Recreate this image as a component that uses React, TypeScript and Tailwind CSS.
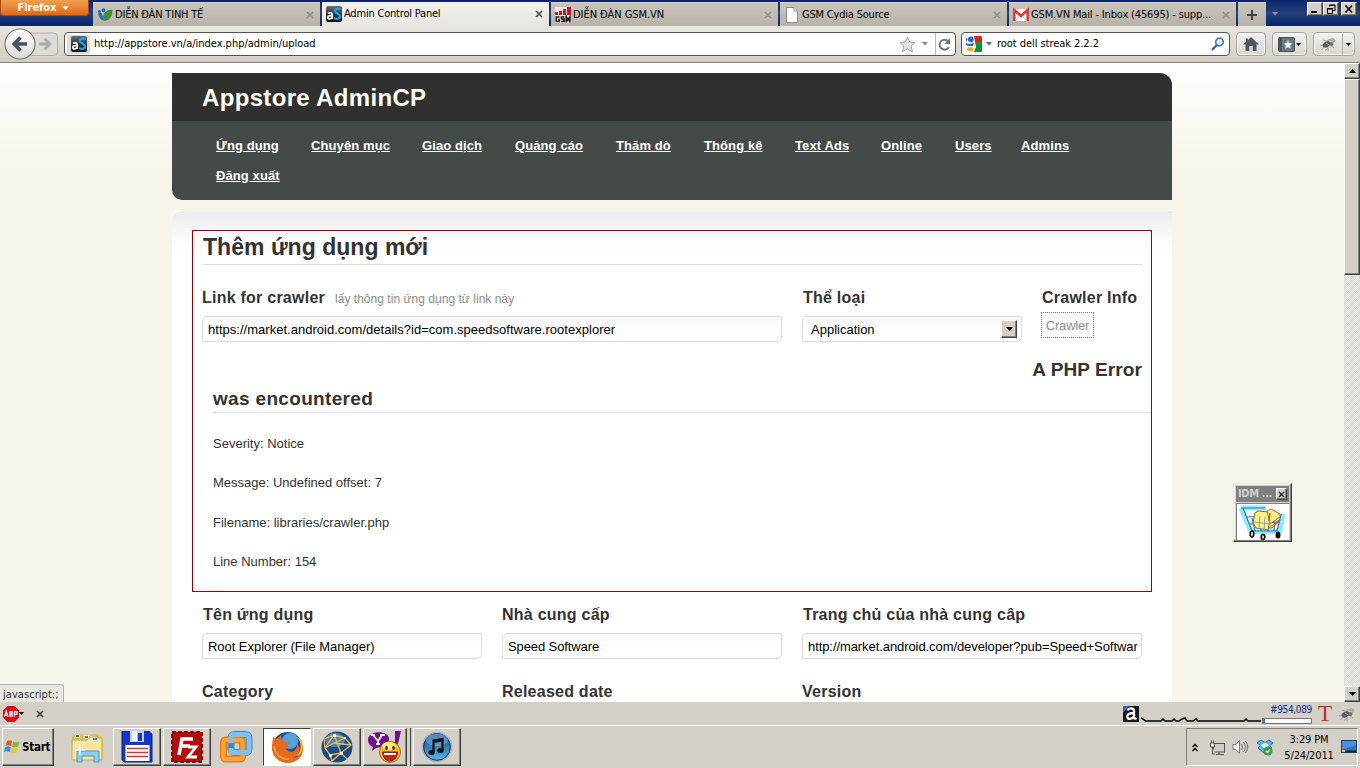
import type { ReactNode } from "react";

const raised =
  "border border-t-white border-l-white border-r-[#404040] border-b-[#404040] bg-[#d4d0c8] shadow-[inset_-1px_-1px_0_#808080]";

/* ---------- icons ---------- */

function AsIcon() {
  return (
    <svg width="16" height="16" viewBox="0 0 16 16" className="shrink-0">
      <defs>
        <linearGradient id="asbg" x1="0" y1="0" x2="0" y2="1">
          <stop offset="0" stopColor="#6a6e72" />
          <stop offset=".55" stopColor="#2c3034" />
          <stop offset="1" stopColor="#0c0e10" />
        </linearGradient>
      </defs>
      <rect width="16" height="16" rx="2" fill="url(#asbg)" />
      <path d="M2 7.4C3.5 6.4 6.2 6.4 6.2 8.600V13M6.200 9.600C3.400 9.400 1.800 10 1.800 11.400C1.800 13.400 5 13.300 6.200 11.400" fill="none" stroke="#fff" strokeWidth="1.700" />
      <path d="M14.300 3.800C12.600 2 9 2.400 9 5C9 7.800 14 7.200 14 10.300C14 13.400 9.800 13.300 8 11.800" fill="none" stroke="#18a0ea" strokeWidth="2.300" />
    </svg>
  );
}

function TinhTeIcon() {
  return (
    <svg width="16" height="16" viewBox="0 0 16 16" className="shrink-0">
      <circle cx="6.500" cy="3.200" r="2" fill="#1d6fb8" />
      <circle cx="2.400" cy="4.500" r="1.500" fill="#1d6fb8" />
      <path d="M1 6.500C3 5.500 5 6 5.500 8L6.500 13.500C3.500 13.500 2 9 1 6.500Z" fill="#1d6fb8" />
      <path d="M15.500 2.500C9 2.500 4.500 7 6.500 14C12.500 14.500 15.500 9 15.500 2.500Z" fill="#3f8f3c" />
    </svg>
  );
}

function GsmIcon() {
  return (
    <svg width="16" height="16" viewBox="0 0 16 16" className="shrink-0">
      <rect width="16" height="16" fill="#eee8e6" />
      <path d="M0 5h3v3H0zM4 4h3v4H4zM8 2h3v6H8zM12 0h4v8h-4z" fill="#d01424" />
      <path d="M4.500 10H1.300V14.500H4V12.500H3M9.500 10H6.500V12H9V14.500H6M11.300 15.500V10L13 13L14.800 10V15.500" fill="none" stroke="#161616" strokeWidth="1.700" />
    </svg>
  );
}

function PageIcon() {
  return (
    <svg width="16" height="16" viewBox="0 0 16 16" className="shrink-0">
      <path d="M2.500 .5H10L13.500 4V15.500H2.500Z" fill="#fbfbfb" stroke="#8b8b8b" />
      <path d="M10 .5V4H13.500" fill="#ddd" stroke="#999" />
    </svg>
  );
}

function GmailIcon() {
  return (
    <svg width="16" height="16" viewBox="0 0 16 16" className="shrink-0">
      <rect y="2" width="16" height="12" rx="1" fill="#fff" />
      <path d="M1.300 14V3L8 9L14.700 3V14" fill="none" stroke="#d93a36" strokeWidth="2.500" />
      <path d="M3 13L6.500 9M13 13L9.500 9" stroke="#e8aaa8" strokeWidth=".8" />
    </svg>
  );
}

function CloseX({ color = "#8e8b85", w = 8 }: { color?: string; w?: number }) {
  return (
    <svg width={w} height={w} viewBox="0 0 8 8" className="shrink-0">
      <path d="M1 1L7 7M7 1L1 7" stroke={color} strokeWidth="1.600" />
    </svg>
  );
}

function Down({ color = "#000", w = 7 }: { color?: string; w?: number }) {
  return (
    <svg width={w} height={w / 2 + 0.5} viewBox="0 0 7 4" className="shrink-0">
      <path d="M0 0H7L3.500 4Z" fill={color} />
    </svg>
  );
}

function BugIcon({ w = 16 }: { w?: number }) {
  return (
    <svg width={w} height={w} viewBox="0 0 16 16" className="shrink-0">
      <path d="M3 9L0 10M4 11L1.500 14M8 11L8 15M10 9L14 12M6 5L3 4M8 12L5 14.500" stroke="#8a8a88" strokeWidth=".7" />
      <ellipse cx="10.500" cy="5.500" rx="5" ry="2.700" transform="rotate(-20 10.500 5.500)" fill="#a9a9a7" />
      <ellipse cx="6.500" cy="8.500" rx="4" ry="2.700" transform="rotate(-25 6.500 8.500)" fill="#5a5a58" />
      <circle cx="11.500" cy="8" r="2" fill="#74726f" />
      <path d="M6 7L9 9M9 5L13 6" stroke="#d8d8d8" strokeWidth=".7" />
    </svg>
  );
}

/* ---------- browser chrome ---------- */

function Tab({ icon, title, active, tracking }: { icon: ReactNode; title: string; active?: boolean; tracking?: string }) {
  return (
    <div
      className={
        "flex h-6 w-[227px] shrink-0 items-center pr-[6px] pl-1 " +
        (active
          ? "bg-gradient-to-b from-[#f2f1ed] to-[#e8e6e1]"
          : "border-t border-[#d5d2ca] bg-gradient-to-b from-[#c9c5bd] to-[#b7b3ab]")
      }
    >
      {icon}
      <span className={"ml-[2px] flex-1 pt-px whitespace-nowrap " + (tracking ?? "tracking-[-0.200px]")}>{title}</span>
      <CloseX color={active ? "#4c4c4c" : "#93908a"} />
    </div>
  );
}

function WindowButton({ children }: { children: ReactNode }) {
  return (
    <div className={"flex h-[14px] w-4 items-center justify-center " + raised}>
      <svg width="10" height="10" viewBox="0 0 10 10" fill="none" stroke="#000">
        {children}
      </svg>
    </div>
  );
}

function TabStrip() {
  return (
    <div className="flex h-[26px] items-start bg-gradient-to-b from-[#0a246a] via-[#24407c] to-[#0a246a]">
      <div className="flex h-4 w-[89px] items-center justify-center gap-[6px] rounded-b-[3px] border border-t-0 border-[#a04c10] bg-gradient-to-b from-[#f1a04c] to-[#dd6a12] pr-[2px] pt-px font-['DejaVu_Sans_Condensed'] text-[11px] font-bold tracking-[-0.050px] text-white">
        Firefox
        <Down color="#fff" />
      </div>
      <div className="ml-1 flex gap-[2px] pt-[2px]">
        <Tab icon={<TinhTeIcon />} title="DIỄN ĐÀN TINH TẾ" />
        <Tab icon={<AsIcon />} title="Admin Control Panel" active />
        <Tab icon={<GsmIcon />} title="DIỄN ĐÀN GSM.VN" tracking="tracking-[-0.050px]" />
        <Tab icon={<PageIcon />} title="GSM Cydia Source" tracking="tracking-[-0.200px]" />
        <Tab icon={<GmailIcon />} title="GSM.VN Mail - Inbox (45695) - supp..." tracking="tracking-[-0.150px]" />
        <div className="flex h-6 w-7 items-center justify-center border-t border-[#d5d2ca] bg-gradient-to-b from-[#c9c5bd] to-[#b7b3ab]">
          <svg width="10" height="10" viewBox="0 0 10 10">
            <path d="M5 0V10M0 5H10" stroke="#3e444a" strokeWidth="2" />
          </svg>
        </div>
      </div>
      <div className="ml-[6px] pt-[12px]">
        <Down color="#8e97ac" w={6} />
      </div>
      <div className="mt-[2px] mr-[3px] ml-auto flex">
        <WindowButton>
          <path d="M1 8H7" strokeWidth="2" />
        </WindowButton>
        <WindowButton>
          <path d="M3.500 3V1H9V6.500H7M3 1.500H9" />
          <path d="M1.500 4.500H6.500V9.500H1.500ZM1 5H7" />
        </WindowButton>
        <div className="w-[2px]" />
        <WindowButton>
          <path d="M1.500 1.500L8 8.500M8 1.500L1.500 8.500" strokeWidth="1.600" />
        </WindowButton>
      </div>
    </div>
  );
}

const toolButton =
  "flex h-6 items-center justify-center rounded-[4px] border border-[#a6a39d] bg-gradient-to-b from-[#f3f2ef] to-[#d9d6d0] shadow-[inset_0_0_0_1px_#f8f7f4]";

function NavBar() {
  return (
    <div className="flex h-[37px] items-center border-b border-[#85827c] bg-gradient-to-b from-[#e8e6e1] to-[#d2cec6] pl-1">
      <svg width="56" height="34" viewBox="0 0 56 34" className="shrink-0">
        <defs>
          <linearGradient id="bk" x1="0" y1="0" x2="0" y2="1">
            <stop offset="0" stopColor="#fff" />
            <stop offset="1" stopColor="#dcdad5" />
          </linearGradient>
        </defs>
        <rect x="24" y="6" width="29.500" height="22.500" rx="3.500" fill="#dedcd7" stroke="#b5b2ac" />
        <circle cx="16" cy="17" r="15" fill="url(#bk)" stroke="#77746f" strokeWidth="1.200" />
        <path d="M23 17H11M16.500 10.500L10 17L16.500 23.500" fill="none" stroke="#49535e" strokeWidth="3.300" />
        <path d="M35 17H44M40.500 11.500L46 17L40.500 22.500" fill="none" stroke="#a7adb1" strokeWidth="2.800" />
      </svg>
      <div className="ml-1 flex h-6 w-[892px] items-center rounded-[4px] border border-[#55534f] bg-white pl-[2px]">
        <div className="flex h-[19px] w-[23px] items-center justify-center rounded-[2px] bg-[#dedbd6]">
          <AsIcon />
        </div>
        <span className="ml-1 flex-1 pt-px tracking-[-0.020px]">http://appstore.vn/a/index.php/admin/upload</span>
        <svg width="17" height="17" viewBox="0 0 17 17">
          <path d="M8.500 1L10.800 6L16 6.500L12.200 10L13.400 15.700L8.500 12.800L3.600 15.700L4.800 10L1 6.500L6.200 6Z" fill="#e3e3e3" stroke="#a5a5a5" />
        </svg>
        <div className="mr-[7px] ml-[6px]">
          <Down color="#858585" w={6} />
        </div>
        <div className="flex h-[22px] w-5 items-center justify-center border-l border-[#bbb] pr-[2px]">
          <svg width="13" height="13" viewBox="0 0 13 13">
            <path d="M10.500 3.500A5 5 0 1 0 11 9" fill="none" stroke="#777" strokeWidth="2" />
            <path d="M12 0V6H6.500Z" fill="#777" />
          </svg>
        </div>
      </div>
      <div className="ml-[5px] flex h-6 w-[269px] items-center rounded-[4px] border border-[#55534f] bg-white pr-1 pl-1">
        <svg width="16" height="16" viewBox="0 0 16 16">
          <rect width="16" height="16" rx="1.500" fill="#fff" />
          <path d="M8 0H14.500A1.500 1.500 0 0 1 16 1.500V6H9Z" fill="#e3231e" />
          <path d="M9 6H16V14.500A1.500 1.500 0 0 1 14.500 16H8L10 11Z" fill="#178f3b" />
          <path d="M0 1.500L1.500 3.500L0 6Z" fill="#2d66c8" />
          <circle cx="4.800" cy="3.300" r="2.900" fill="#2d66c8" />
          <path d="M0 7L3 8L8 7L7 10L3 10L0 9Z" fill="#2d66c8" />
          <ellipse cx="4.200" cy="13.200" rx="3.300" ry="2.300" fill="#f2b01d" />
        </svg>
        <div className="mr-[4px] ml-1">
          <Down color="#6b6b6b" w={6} />
        </div>
        <span className="ml-[1px] flex-1 pt-px tracking-[-0.050px]">root dell streak 2.2.2</span>
        <svg width="14" height="14" viewBox="0 0 14 14">
          <circle cx="8.500" cy="5" r="3.800" fill="#eef6fd" stroke="#3f7fbd" strokeWidth="1.700" />
          <path d="M5.800 8L1 12.800" stroke="#356ca5" strokeWidth="2.400" />
        </svg>
      </div>
      <div className={"ml-[6px] w-[30px] " + toolButton}>
        <svg width="16" height="14" viewBox="0 0 16 14">
          <path d="M8 0L16 7.500H13.500V14H9.700V9H6.300V14H2.500V7.500H0L3 4.700V1.500H5V3Z" fill="#4c5965" />
        </svg>
      </div>
      <div className={"ml-[6px] w-[35px] gap-[1px] " + toolButton}>
        <svg width="17" height="15" viewBox="0 0 17 15">
          <rect x=".5" y=".5" width="16" height="14" rx="1" fill="#6a7681" stroke="#45515d" />
          <rect x="1" y="1" width="3" height="13" fill="#495765" />
          <path d="M10 3L11.300 6L14.500 6.300L12 8.400L12.800 11.800L10 10L7.200 11.800L8 8.400L5.500 6.300L8.700 6Z" fill="#fff" />
        </svg>
        <Down w={5} />
      </div>
      <div className={"ml-[6px] w-[42px] " + toolButton}>
        <div className="flex flex-1 justify-center">
          <BugIcon />
        </div>
        <div className="flex h-[22px] w-3 items-center justify-center border-l border-[#b0ada6]">
          <Down w={5} />
        </div>
      </div>
    </div>
  );
}

/* ---------- web page ---------- */

const menu = [
  ["Ứng dụng", "w-[95px]"],
  ["Chuyên mục", "w-[111px]"],
  ["Giao dịch", "w-[93px]"],
  ["Quảng cáo", "w-[101px]"],
  ["Thăm dò", "w-[88px]"],
  ["Thống kê", "w-[91px]"],
  ["Text Ads", "w-[86px]"],
  ["Online", "w-[74px]"],
  ["Users", "w-[66px]"],
  ["Admins", "w-[80px]"],
  ["Đăng xuất", "w-[95px]"],
];

const field =
  "block h-[26px] w-full rounded-tl-[5px] rounded-br-[5px] border border-[#dcdcdc] bg-gradient-to-b from-[#f8f8f8] to-white to-60% px-[5px] text-[13px] text-black outline-none";

function Label({ children, className = "" }: { children: ReactNode; className?: string }) {
  return <div className={"h-5 text-[16px] leading-[22px] font-bold whitespace-nowrap tracking-[0.240px] " + className}>{children}</div>;
}

function ScrollBar() {
  return (
    <div className="flex w-4 shrink-0 flex-col bg-[repeating-conic-gradient(#fff_0_25%,#d4d0c8_0_50%)] bg-[length:2px_2px]">
      <div className={"flex h-4 items-center justify-center " + raised}>
        <svg width="7" height="4" viewBox="0 0 7 4">
          <path d="M0 4H7L3.500 0Z" />
        </svg>
      </div>
      <div className={"h-[196px] " + raised} />
      <div className={"mt-auto flex h-4 items-center justify-center " + raised}>
        <Down />
      </div>
    </div>
  );
}

function AdminPage() {
  return (
    <div className="h-full flex-1 overflow-hidden bg-[linear-gradient(#fffefc,#f7f4e9_110px)] pt-[10px] pl-[172px] font-['Liberation_Sans',Arial,sans-serif] text-[13px] text-[#333]">
      <div className="w-[1000px]">
        <div className="flex h-12 items-center rounded-tr-[12px] bg-[#30302e] pt-px pl-[30px] text-[24px] font-bold tracking-[0.330px] text-white">
          Appstore AdminCP
        </div>
        <div className="flex h-[79px] flex-wrap content-start rounded-bl-[10px] bg-[#444a48] pt-[10px] pl-11">
          {menu.map(([name, width]) => (
            <a key={name} className={"h-[30px] shrink-0 whitespace-nowrap leading-[30px] font-bold tracking-[0.100px] text-white underline " + width}>
              {name}
            </a>
          ))}
        </div>
        <div className="mt-[10px] h-[560px] rounded-tl-[10px] border-t border-white bg-[linear-gradient(#ededed,#fff_40px)] px-5 pt-[19px]">
          <div className="h-[362px] border border-[#990000] pl-[9px]">
            <h2 className="h-[34px] w-[940px] border-b border-[#dcdcdc] pl-px text-[23px] leading-[32px] font-bold tracking-[0.030px]">
              Thêm ứng dụng mới
            </h2>
            <div className="flex h-[77px] pt-[22px]">
              <div className="w-[580px]">
                <Label>
                  Link for crawler
                  <span className="ml-[10px] text-[12px] font-normal tracking-[0.030px] text-[#8c8c8c]">lấy thông tin ứng dụng từ link này</span>
                </Label>
                <input className={"mt-[9px] tracking-[0.020px] " + field} readOnly value="https://market.android.com/details?id=com.speedsoftware.rootexplorer" />
              </div>
              <div className="ml-5 w-[220px]">
                <Label className="pl-px">Thể loại</Label>
                <div className={"mt-[9px] " + field}>
                  <div className="flex h-6 items-center pl-[3px]">
                    <span className="flex-1 pt-px">Application</span>
                    <div className={"-mr-[1px] flex h-[18px] w-4 items-center justify-center " + raised}>
                      <Down />
                    </div>
                  </div>
                </div>
              </div>
              <div className="ml-[19px]">
                <Label className="pl-px">Crawler Info</Label>
                <div className="mt-[5px] flex h-[26px] w-[53px] items-center justify-center border border-dotted border-[#777] pt-px tracking-[-0.200px] text-[#8c8c8c]">Crawler</div>
              </div>
            </div>
            <div className="h-[41px] w-[940px] pt-[17px] text-right text-[19px] leading-[22px] font-bold tracking-[0.100px]">A PHP Error</div>
            <div className="ml-[11px] h-[30px] border-b border-[#dcdcdc] pt-[5px] text-[19px] leading-[22px] font-bold tracking-[0.330px]">was encountered</div>
            <div className="ml-[11px] grid auto-rows-[39.400px] pt-[11px] leading-[39px]">
              <p>Severity: Notice</p>
              <p>Message: Undefined offset: 7</p>
              <p>Filename: libraries/crawler.php</p>
              <p>Line Number: 154</p>
            </div>
          </div>
          <div className="grid grid-cols-[280px_280px_340px] gap-x-5 pt-[12px] pl-[10px]">
            <div>
              <Label className="pl-px">Tên ứng dụng</Label>
              <input className={"mt-[9px] tracking-[-0.040px] " + field} readOnly value="Root Explorer (File Manager)" />
            </div>
            <div>
              <Label>Nhà cung cấp</Label>
              <input className={"mt-[9px] tracking-[-0.100px] " + field} readOnly value="Speed Software" />
            </div>
            <div>
              <Label className="pl-px">Trang chủ của nhà cung câp</Label>
              <input className={"mt-[9px] !px-[5px] !pr-1 tracking-[-0.080px] " + field} readOnly value="http://market.android.com/developer?pub=Speed+Software" />
            </div>
            <Label className="mt-[22px]">Category</Label>
            <Label className="mt-[22px]">Released date</Label>
            <Label className="mt-[22px]">Version</Label>
          </div>
        </div>
      </div>
    </div>
  );
}

function IdmWindow() {
  return (
    <div className="absolute top-[483px] left-[1233px] h-[59px] w-[59px] border border-t-[#e8e6e0] border-l-[#e8e6e0] border-r-[#404040] border-b-[#404040] bg-[#d4d0c8] p-[2px] shadow-[inset_-1px_-1px_0_#808080,inset_1px_1px_0_#fff]">
      <div className="flex h-4 items-center bg-[#808080] pr-[2px] pl-[2px] text-[11px] font-bold tracking-[-0.350px] text-[#d4d0c8]">
        <span className="flex-1 whitespace-nowrap">IDM ...</span>
        <div className={"flex h-3 w-[11px] items-center justify-center " + raised}>
          <CloseX color="#000" w={7} />
        </div>
      </div>
      <div className="mt-px h-[37px] overflow-hidden border-t border-l border-[#808080] bg-white">
        <svg width="52" height="36" viewBox="0 0 52 36">
          <path d="M4 4H29M4 4L14 28L43 27L46 10" fill="none" stroke="#8cecff" strokeWidth="5" />
          <path d="M4 4H28M6 4L15 27H40L44 11L10 13M13 20L42 18M15 14L18 27M23 14L24 27M32 13L31 27M38 13L37 27" fill="none" stroke="#3474bb" strokeWidth="1.200" />
          <path d="M18 9L21 7L32 8L34 11L31 26L19 24L16 19Z" fill="#fff08a" stroke="#8a6a25" />
          <path d="M30 7L34 5L43 10V13L33 20ZM43 15L35 24L32 24Z" fill="#fff08a" stroke="#b0692a" />
          <path d="M33 9L32 17M43 16L37 22" stroke="#f24a18" strokeWidth="1.400" />
          <path d="M17 18L33 20M23 12L22 25M28 13L27 26" stroke="#7896a0" strokeWidth=".8" />
          <ellipse cx="15" cy="30" rx="1.800" ry="3" fill="#ddd" stroke="#111" strokeWidth="1.600" />
          <ellipse cx="26" cy="33" rx="1.800" ry="2.500" fill="#ddd" stroke="#111" strokeWidth="1.600" />
          <ellipse cx="41" cy="31" rx="2.500" ry="3.500" fill="#111" />
        </svg>
      </div>
    </div>
  );
}

/* ---------- add-on bar and taskbar ---------- */

function AddonBar() {
  return (
    <div className="flex h-[23px] items-center bg-[#d4d0c8] pl-[3px]">
      <svg width="16" height="16" viewBox="0 0 15 15">
        <path d="M4.500 .5H10.500L14.500 4.500V10.500L10.500 14.500H4.500L.5 10.500V4.500Z" fill="#e30613" stroke="#b51a1a" />
        <path d="M1.500 10L3 5L4.700 10M2.300 8.500H4.300M6.300 10V5.500H8.500V7.500H6.500M8.500 7.500V9.800H6.500M10.700 10V5.500H13V7.800H10.700" fill="none" stroke="#fff" strokeWidth="1.200" />
      </svg>
      <Down w={5} />
      <div className="ml-[12px]">
        <CloseX color="#3c3c3c" />
      </div>
      <svg width="18" height="17" viewBox="0 0 18 17" className="ml-auto">
        <rect x="1" y="1" width="16" height="16" fill="#15161e" />
        <path d="M1 1H7L1 8Z" fill="#2d66ee" />
        <path d="M5.500 5.500C6.500 2.500 12 2.500 12 6V12.500C12 14 13.500 14 14.500 13M12 8C7 8 5 9.500 5.300 12C5.800 14.800 10 14.500 12 11.500" fill="none" stroke="#fff" strokeWidth="2.300" />
      </svg>
      <svg width="121" height="17" viewBox="0 0 121 17" className="mt-1 ml-px">
        <path d="M0 11L5 14H20L22 12L24 14H31L33 12L35 14L38 14L41 12L44 11L46 14H52L55 12L57 14H103L105 12L107 14H120" fill="none" stroke="#000" strokeWidth="1.500" />
      </svg>
      <div className="flex w-[50px] flex-col items-end font-['DejaVu_Sans_Condensed'] text-[10px] leading-[12px] tracking-[-0.350px] text-[#0c2d8e]">
        #954,089
        <div className="mt-[2px] h-[6px] w-[50px] border border-[#77777c] bg-white">
          <div className="h-full w-[2px] bg-[#3f71e8]" />
        </div>
      </div>
      <span className="ml-[6px] font-['Liberation_Serif',serif] text-[23px] leading-[22px] text-[#b92e24]">T</span>
      <div className="mr-[5px] ml-[7px]">
        <BugIcon />
      </div>
    </div>
  );
}

function TaskButton({ children, className = "" }: { children: ReactNode; className?: string }) {
  return <div className={"flex h-[38px] w-12 shrink-0 items-center justify-center " + raised + " " + className}>{children}</div>;
}

function TaskBar() {
  return (
    <div className="flex h-[43px] items-start border-t border-white bg-[#d4d0c8] pt-[2px] pl-[2px]">
      <div className={"flex h-[38px] w-[52px] items-center gap-[1px] pl-[1px] " + raised}>
        <svg width="17" height="16" viewBox="0 0 17 16">
          <path d="M3 2C5 .8 6.500 1 8 2L7 7.200C5.500 6.200 3.500 6 1.500 7Z" fill="#e8572a" />
          <path d="M9 2.500C11 3.700 13 3.500 15.500 2.200L14.300 7.400C12 8.600 10 8.500 8 7.700Z" fill="#7dbb3c" />
          <path d="M1.300 8C3.300 7 5.300 7.200 6.800 8.200L5.800 13C4 12 2 12 0 13Z" fill="#3f8de0" />
          <path d="M7.800 8.700C9.800 9.800 12 9.600 14 8.500L12.900 13.500C10.700 14.600 8.500 14.500 6.700 13.500Z" fill="#f7c52d" />
        </svg>
        <span className="pt-px text-[11.500px] font-bold tracking-[-0.250px]">Start</span>
      </div>
      <svg width="34" height="34" viewBox="0 0 34 34" className="mt-[3px] ml-[16px]">
        <path d="M2 5L4 3H12L14 5H20L22 3H27L33 7V28H2Z" fill="#dcbf62" />
        <path d="M2 9H17L19 7H32V29H2Z" fill="#f4e49c" stroke="#c5a84e" />
        <path d="M5 5H10M14 6H19M21 8H27" stroke="#fff" strokeWidth="3" />
        <path d="M6 5H9" stroke="#3e9b43" strokeWidth="2" />
        <path d="M15 6H18" stroke="#d2422d" strokeWidth="2" />
        <path d="M23 8H27" stroke="#2d8edc" strokeWidth="2" />
        <path d="M3 12H31" stroke="#ffefb8" />
        <path d="M7 31V20H29V31H24V25H12V31Z" fill="#8bcdea" stroke="#4b9bc9" />
        <path d="M10 14V24M5 19H15" stroke="#fff" strokeWidth="1.200" />
      </svg>
      <TaskButton className="ml-[9px]">
        <svg width="32" height="32" viewBox="0 0 32 32">
          <path d="M1 0H28L31 3V31H3L1 29Z" fill="#1239c8" stroke="#0b2270" />
          <rect x="9" y="0" width="14" height="11" fill="#c5cdd9" />
          <rect x="11" y="0" width="5" height="10" fill="#eef1f6" />
          <rect x="17" y="2" width="4" height="8" fill="#1239c8" />
          <rect x="4.500" y="14" width="24" height="16" fill="#fff" />
          <path d="M6 17.500H27M6 21.500H27M6 25.500H27" stroke="#e03232" strokeWidth="1.400" />
        </svg>
      </TaskButton>
      <TaskButton className="ml-[2px]">
        <svg width="34" height="34" viewBox="0 0 34 34">
          <rect x="2" y="2" width="30" height="30" fill="#b30c0c" stroke="#7c0505" strokeWidth="2" strokeDasharray="4 2" />
          <path d="M9 25L12 9H23M11 16H20" fill="none" stroke="#fff" strokeWidth="3.500" />
          <path d="M18 17H26L18 27H27" fill="none" stroke="#fff" strokeWidth="2.800" />
        </svg>
      </TaskButton>
      <svg width="34" height="34" viewBox="0 0 34 34" className="mt-[2px] ml-[8px]">
        <rect x="12" y="4.500" width="18" height="18" rx="3" fill="none" stroke="#4688bc" strokeWidth="7" />
        <rect x="4.500" y="10" width="19" height="19" rx="2" fill="none" stroke="#ee7c16" strokeWidth="7" />
        <rect x="4.500" y="10" width="19" height="19" rx="2" fill="none" stroke="#fba438" strokeWidth="4" />
        <path d="M12 13V7Q12 4.500 14.500 4.500H27Q30 4.500 30 8V20Q30 22.500 27 22.500H12V18" fill="none" stroke="#80bfe8" strokeWidth="5" />
      </svg>
      <div className="ml-[10px] flex h-[38px] w-12 items-center justify-center border border-t-[#404040] border-l-[#404040] border-r-white border-b-white bg-white">
        <svg width="33" height="33" viewBox="0 0 33 33">
          <circle cx="16.500" cy="16" r="15" fill="#224f9b" />
          <circle cx="19" cy="10" r="8" fill="#56a3da" />
          <path d="M2 6L6 8L10 4L11 10L18 12L15 18C20 24 27 19 26 13C31 17 28 25 22 27C29 26 32 20 31 12C35 22 28 32 17 32C7 32 0 24 1 15Z" fill="#e66a1e" />
          <path d="M26 6C31 11 31 21 25 25C31 25 33 16 31 9Z" fill="#f9bc35" />
          <path d="M3 15C4 23 10 29 18 28" fill="none" stroke="#f39a2e" strokeWidth="2" />
        </svg>
      </div>
      <TaskButton className="ml-[2px]">
        <svg width="34" height="34" viewBox="0 0 34 34">
          <circle cx="17" cy="17" r="15.500" fill="#184c82" />
          <ellipse cx="15" cy="10" rx="10" ry="7" fill="#4b87b8" />
          <path d="M4 9L14 5L25 8L31 15L21 23L10 25L5 18L14 5L21 23L27 29M4 9L5 18M10 25L12 31L21 23M14 13L25 8M14 13L31 15M5 18L14 13" fill="none" stroke="#f0b54e" strokeWidth="1.300" />
          <path d="M13 4h3v3h-3zM20 22h3v3h-3zM9 24h3v3H9zM24 7h2v2h-2z" fill="#fff8d8" />
        </svg>
      </TaskButton>
      <TaskButton className="ml-[2px] !w-[44px]">
        <svg width="36" height="34" viewBox="0 0 36 34" className="shrink-0">
          <path d="M1 10C1 0 22 0 22 9C22 17 13 17 9 18L5 21L6 17C3 16 1 13 1 10Z" fill="#71108e" />
          <path d="M28 1H34L31 14H28Z" fill="#71108e" />
          <path d="M6 5L11 11L15 5M11 11V14M4 5H8M13 5H18M9 14H13" fill="none" stroke="#fff" strokeWidth="1.800" />
          <circle cx="23" cy="22" r="10.500" fill="#f9b824" stroke="#b66b12" />
          <ellipse cx="22" cy="16" rx="7" ry="4" fill="#ffe679" />
          <ellipse cx="19.500" cy="18" rx="1.300" ry="2.300" fill="#332" />
          <ellipse cx="26.500" cy="18" rx="1.300" ry="2.300" fill="#332" />
          <path d="M15.500 22H30.500C30 29 26 31 23 31C19 31 16 28 15.500 22Z" fill="#c62318" stroke="#702010" />
          <path d="M17 23H29V25H17Z" fill="#fff" />
        </svg>
      </TaskButton>
      <div className="h-[38px] w-[4px] border-r border-[#404040] bg-[#d4d0c8]" />
      <TaskButton className="ml-[2px]">
        <svg width="32" height="32" viewBox="0 0 32 32">
          <defs>
            <linearGradient id="it" x1="0" y1="0" x2="0" y2="1">
              <stop offset="0" stopColor="#1c3a66" />
              <stop offset="1" stopColor="#55c0f8" />
            </linearGradient>
          </defs>
          <circle cx="16" cy="16" r="14.500" fill="url(#it)" stroke="#a9b1ba" strokeWidth="1.500" />
          <circle cx="16" cy="16" r="13.300" fill="none" stroke="#16345e" strokeWidth="1" />
          <ellipse cx="16" cy="9" rx="11" ry="6.500" fill="#6ba6dc" opacity=".7" />
          <path d="M12.500 21V9.500L21.500 8V19M12.500 11L21.500 9.500" fill="none" stroke="#111" strokeWidth="2.200" />
          <ellipse cx="10.500" cy="21.500" rx="3.200" ry="2.500" fill="#111" />
          <ellipse cx="19.500" cy="19.500" rx="3.200" ry="2.500" fill="#111" />
        </svg>
      </TaskButton>
      <div className="mr-[2px] ml-auto flex h-[38px] w-[172px] items-center border border-t-[#808080] border-l-[#808080] border-r-white border-b-white pl-[5px]">
        <svg width="6" height="9" viewBox="0 0 6 9" fill="none" stroke="#000" strokeWidth="1.300">
          <path d="M.5 4L3 1.500L5.500 4M.5 8L3 5.500L5.500 8" />
        </svg>
        <svg width="17" height="17" viewBox="0 0 17 17" className="ml-[11px]">
          <rect x="4.500" y="4.500" width="11" height="8.500" fill="#cfcdc8" stroke="#555" />
          <path d="M7 15.500H15M10 13V15" stroke="#555" />
          <path d="M1.500 4H5.500V8H1.500ZM2.500 4V1.500M4.500 4V1.500M3.500 8V15H6" fill="#eee" stroke="#555" />
        </svg>
        <svg width="17" height="16" viewBox="0 0 17 16" fill="none" stroke="#777" className="ml-[6px]">
          <path d="M1 5.500H4L7.500 1.500V14.500L4 10.500H1Z" fill="#f5f5f3" />
          <path d="M9.500 5Q11.500 8 9.500 11M11.500 3Q15 8 11.500 13M13.500 2Q18 8 13.500 14" />
        </svg>
        <svg width="18" height="17" viewBox="0 0 18 17" className="ml-[7px]">
          <path d="M5 1L9 3.500L13 1L17 4L13.500 6.500L16 9L9 15L2 9L4.500 6.500L1 4Z" fill="#5fb2e8" stroke="#2876b3" />
          <path d="M4.500 6.500L9 3.500L13.500 6.500L9 9.500Z" fill="#e7f4fd" />
          <circle cx="12" cy="12" r="4.500" fill="#3a9a43" />
          <path d="M10 12L11.500 13.500L14 10.500" fill="none" stroke="#fff" strokeWidth="1.400" />
        </svg>
        <div className="ml-[7px] w-[56px] pt-px text-center leading-4 tracking-[-0.150px]">
          3:29 PM
          <br />
          5/24/2011
        </div>
        <svg width="16" height="14" viewBox="0 0 16 14" className="ml-[4px]">
          <rect x=".5" y=".5" width="15" height="12" fill="#2e72c5" stroke="#1b3967" />
          <path d="M1 1H15V5L1 10Z" fill="#4b91dc" />
          <path d="M1 10.500H15V12H1Z" fill="#123" />
          <path d="M1 10H4V12H1Z" fill="#f4b52d" />
        </svg>
      </div>
    </div>
  );
}

export default function App() {
  return (
    <div className="relative flex h-[768px] w-[1360px] flex-col overflow-hidden bg-[#d4d0c8] font-['DejaVu_Sans_Condensed','DejaVu_Sans',sans-serif] text-[11px] text-black">
      <TabStrip />
      <NavBar />
      <div className="flex h-[639px]">
        <AdminPage />
        <ScrollBar />
      </div>
      <AddonBar />
      <TaskBar />
      <IdmWindow />
      <div className="absolute top-[684px] left-0 h-[18px] w-16 rounded-tr-[3px] border border-b-0 border-l-0 border-[#b5b2ab] bg-[#e9e7e2] pl-[3px] leading-[19px] tracking-[0.050px] text-[#333]">
        javascript:;
      </div>
    </div>
  );
}
